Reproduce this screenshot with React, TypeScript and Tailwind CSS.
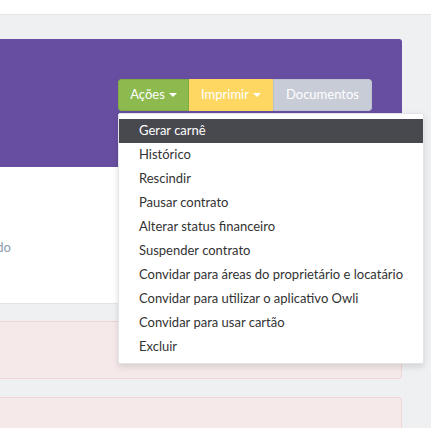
import { useState } from 'react'

const items = [
  'Gerar carnê',
  'Histórico',
  'Rescindir',
  'Pausar contrato',
  'Alterar status financeiro',
  'Suspender contrato',
  'Convidar para áreas do proprietário e locatário',
  'Convidar para utilizar o aplicativo Owli',
  'Convidar para usar cartão',
  'Excluir',
]

function Caret() {
  return (
    <span className="inline-block ml-[4px] w-0 h-0 border-l-[4px] border-r-[4px] border-t-[4px] border-l-transparent border-r-transparent border-t-white align-middle" />
  )
}

export default function App() {
  const [active] = useState(0)

  return (
    <div
      className="w-[431px] h-[428px] overflow-hidden bg-[#eff0f2] text-[13px]"
      style={{ fontFamily: 'Lato, "Open Sans", sans-serif' }}
    >
      {/* top bar */}
      <div className="h-[15px] bg-white border-b border-[#e3e4e7]" />

      <div className="pt-[24px] w-[402px] flex flex-col">
        {/* header card */}
        <div className="h-[128px] bg-[#674ea0] rounded-tr-[3px] pt-[40px] flex justify-end pr-[30px]">
          <div className="relative h-[32px]">
            <div className="flex h-[32px] rounded-[3px] overflow-hidden text-white">
              <button className="w-[71px] bg-[#8cba4e] flex items-center justify-center border border-[#7fad44] rounded-l-[3px]">
                Ações
                <Caret />
              </button>
              <button className="w-[84px] bg-[#fed763] flex items-center justify-center">
                Imprimir
                <Caret />
              </button>
              <button className="w-[99px] bg-[#c8ccd7] flex items-center justify-center border border-[#bfc3cf] rounded-r-[3px]">
                Documentos
              </button>
            </div>

            {/* dropdown menu */}
            <div className="absolute left-0 top-[34px] w-[306px] bg-white border border-[#e2e4ea] rounded-[2px] shadow-[0_3px_6px_rgba(0,0,0,0.12)] pt-[5px] pb-[4px] z-10">
              {items.map((label, i) => (
                <div
                  key={label}
                  className={
                    'h-[24px] flex items-center pl-[20px] whitespace-nowrap ' +
                    (i === active ? 'bg-[#48484f] text-white' : 'text-[#333333]')
                  }
                >
                  {label}
                </div>
              ))}
            </div>
          </div>
        </div>

        {/* body card */}
        <div className="h-[137px] bg-white border-b border-[#e3e4e7] flex items-center">
          <div className="w-[11px] overflow-hidden flex justify-end mt-[26px]">
            <span className="whitespace-nowrap text-[#8c9aae]">Pago em dia e regularizado</span>
          </div>
        </div>

        <div className="mt-[17px] h-[58px] bg-[#f6e9e9] border border-l-0 border-[#efd5d6] rounded-r-[4px]" />
        <div className="mt-[18px] h-[60px] bg-[#f6e9e9] border border-l-0 border-[#efd5d6] rounded-r-[4px]" />
      </div>
    </div>
  )
}
